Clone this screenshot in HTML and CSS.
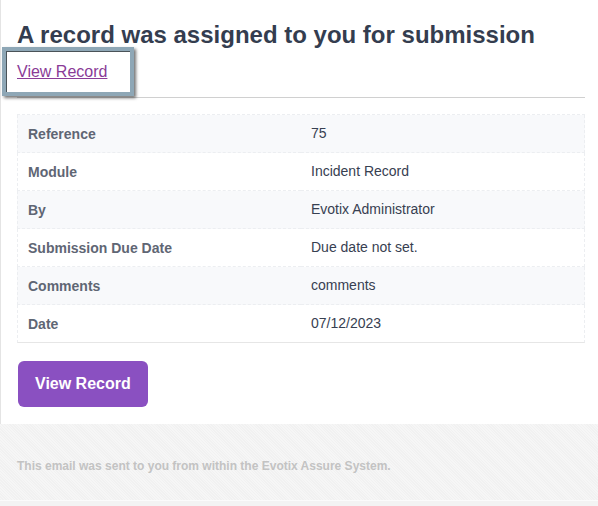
FILE: index.html
```html
<!DOCTYPE html>
<html lang="en">
<head>
<meta charset="utf-8">
<title>A record was assigned to you for submission</title>
<link rel="stylesheet" href="styles.css">
</head>
<body>
<div class="page">
  <div class="card">
    <h1 class="title">A record was assigned to you for submission</h1>
    <div class="link-row">
      <a class="link" href="#">View Record</a>
      <span class="highlight"></span>
    </div>
    <hr class="rule">
    <table class="details">
      <tbody>
        <tr class="stripe"><td class="label">Reference</td><td class="value">75</td></tr>
        <tr><td class="label">Module</td><td class="value">Incident Record</td></tr>
        <tr class="stripe"><td class="label">By</td><td class="value">Evotix Administrator</td></tr>
        <tr><td class="label">Submission Due Date</td><td class="value">Due date not set.</td></tr>
        <tr class="stripe"><td class="label">Comments</td><td class="value">comments</td></tr>
        <tr class="last"><td class="label">Date</td><td class="value">07/12/2023</td></tr>
      </tbody>
    </table>
    <div class="actions">
      <a class="btn" href="#">View Record</a>
    </div>
  </div>
  <div class="footer">
    <p class="footer-text">This email was sent to you from within the Evotix Assure System.</p>
  </div>
</div>
</body>
</html>
```

FILE: styles.css
```css
html, body {
  margin: 0;
  padding: 0;
}

body {
  background: #f3f3f3;
  font-family: "Liberation Sans", Arial, sans-serif;
}

.page {
  width: 598px;
}

.card {
  background: #ffffff;
  border-left: 1px solid #e4e4e4;
  padding: 21px 13px 17px 16px;
}

.title {
  margin: 0;
  font-size: 24px;
  line-height: 28px;
  font-weight: bold;
  color: #343d4f;
}

.link-row {
  position: relative;
  margin-top: 13px;
  line-height: 20px;
  height: 20px;
}

.link {
  font-size: 16px;
  color: #8a3b97;
  text-decoration: underline;
}

.highlight {
  position: absolute;
  left: -15px;
  top: -15px;
  width: 124px;
  height: 41px;
  border: 4px solid #8ea7b6;
  box-shadow: inset 1px 1px 0 #4a5358, 2px 2px 3px rgba(0, 0, 0, 0.55);
  pointer-events: none;
}

.rule {
  margin: 15px 0 0 0;
  border: 0;
  border-top: 1px solid #d0d0d0;
  height: 0;
}

.details {
  margin-top: 16px;
  width: 100%;
  border-collapse: separate;
  border-spacing: 0;
  border-top: 1px dashed #eceef1;
  font-size: 14px;
}

.details td {
  width: 50%;
  padding: 10px 10px;
  line-height: 17px;
  border-bottom: 1px dashed #eceef1;
}

.details td.label {
  padding-top: 11px;
  padding-bottom: 9px;
  border-left: 1px dashed #eceef1;
  font-weight: bold;
  color: #5f6674;
}

.details td.value {
  border-right: 1px dashed #eceef1;
  color: #374051;
}

.details tr.stripe td {
  background: #f8f9fb;
}

.details tr.last td {
  border-bottom: 1px solid #e6e6e6;
}

.actions {
  margin-top: 18px;
  padding-left: 1px;
  display: flex;
}

.btn {
  display: inline-block;
  background: #8a50c1;
  color: #ffffff;
  font-size: 16px;
  font-weight: bold;
  line-height: 20px;
  padding: 13px 17px;
  border-radius: 6px;
  text-decoration: none;
}

.footer {
  background-color: #f4f4f4;
  background-image: repeating-linear-gradient(45deg, #f1f1f1 0 1px, #f6f6f6 1px 2px);
  padding: 34px 17px 26px;
  border-bottom: 1px solid #fbfbfb;
}

.footer-text {
  margin: 0;
  font-size: 12px;
  line-height: 16px;
  font-weight: bold;
  color: #c3c3c3;
}
```
